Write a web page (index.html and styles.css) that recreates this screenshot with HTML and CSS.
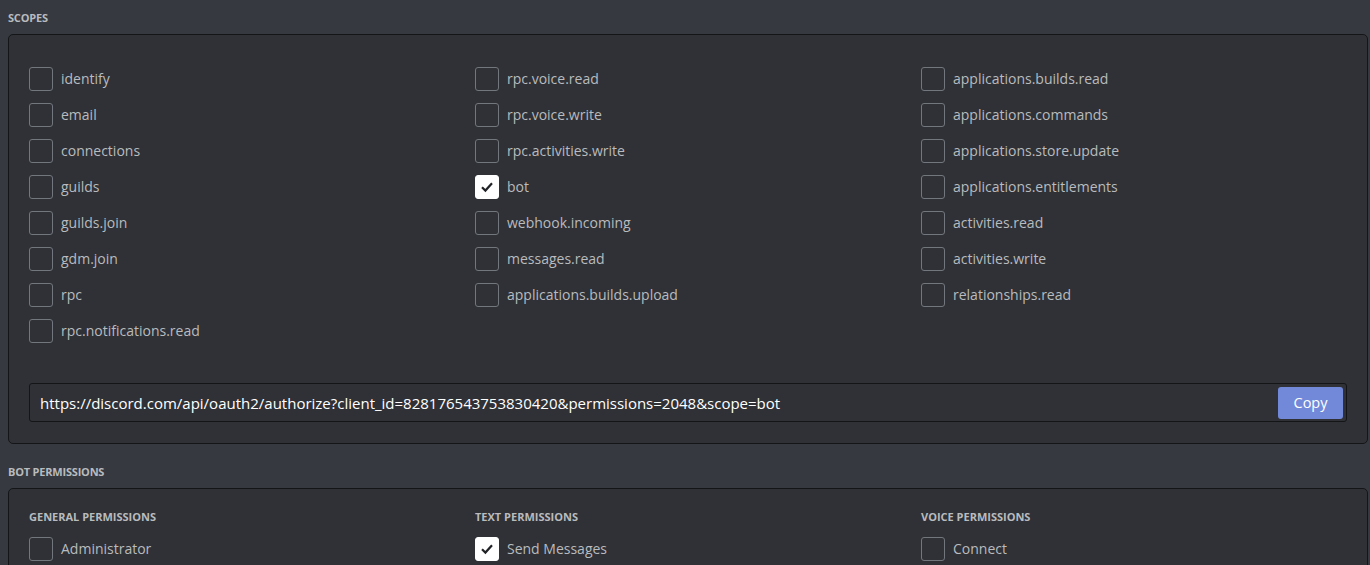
FILE: index.html
```html
<!DOCTYPE html>
<html>
<head>
<meta charset="utf-8">
<link rel="stylesheet" href="styles.css">
</head>
<body>
<div class="page">
  <div class="section-title">Scopes</div>
  <div class="panel scopes">
    <div class="grid">
      <div class="col">
        <label class="item"><span class="box"></span><span class="lbl">identify</span></label>
        <label class="item"><span class="box"></span><span class="lbl">email</span></label>
        <label class="item"><span class="box"></span><span class="lbl">connections</span></label>
        <label class="item"><span class="box"></span><span class="lbl">guilds</span></label>
        <label class="item"><span class="box"></span><span class="lbl">guilds.join</span></label>
        <label class="item"><span class="box"></span><span class="lbl">gdm.join</span></label>
        <label class="item"><span class="box"></span><span class="lbl">rpc</span></label>
        <label class="item"><span class="box"></span><span class="lbl">rpc.notifications.read</span></label>
      </div>
      <div class="col">
        <label class="item"><span class="box"></span><span class="lbl">rpc.voice.read</span></label>
        <label class="item"><span class="box"></span><span class="lbl">rpc.voice.write</span></label>
        <label class="item"><span class="box"></span><span class="lbl">rpc.activities.write</span></label>
        <label class="item"><span class="box checked"><svg width="16" height="16" viewBox="0 0 16 16"><path d="M3 8.3 L6.4 11.6 L13 4.3" fill="none" stroke="#202225" stroke-width="2.2"/></svg></span><span class="lbl">bot</span></label>
        <label class="item"><span class="box"></span><span class="lbl">webhook.incoming</span></label>
        <label class="item"><span class="box"></span><span class="lbl">messages.read</span></label>
        <label class="item"><span class="box"></span><span class="lbl">applications.builds.upload</span></label>
      </div>
      <div class="col">
        <label class="item"><span class="box"></span><span class="lbl">applications.builds.read</span></label>
        <label class="item"><span class="box"></span><span class="lbl">applications.commands</span></label>
        <label class="item"><span class="box"></span><span class="lbl">applications.store.update</span></label>
        <label class="item"><span class="box"></span><span class="lbl">applications.entitlements</span></label>
        <label class="item"><span class="box"></span><span class="lbl">activities.read</span></label>
        <label class="item"><span class="box"></span><span class="lbl">activities.write</span></label>
        <label class="item"><span class="box"></span><span class="lbl">relationships.read</span></label>
      </div>
    </div>
    <div class="url">
      <span class="url-text">https://discord.com/api/oauth2/authorize?client_id=828176543753830420&amp;permissions=2048&amp;scope=bot</span>
      <button class="copy">Copy</button>
    </div>
  </div>

  <div class="section-title second">Bot Permissions</div>
  <div class="panel perms">
    <div class="grid">
      <div class="col">
        <div class="sub-title">General Permissions</div>
        <label class="item"><span class="box"></span><span class="lbl">Administrator</span></label>
      </div>
      <div class="col">
        <div class="sub-title">Text Permissions</div>
        <label class="item"><span class="box checked"><svg width="16" height="16" viewBox="0 0 16 16"><path d="M3 8.3 L6.4 11.6 L13 4.3" fill="none" stroke="#202225" stroke-width="2.2"/></svg></span><span class="lbl">Send Messages</span></label>
      </div>
      <div class="col">
        <div class="sub-title">Voice Permissions</div>
        <label class="item"><span class="box"></span><span class="lbl">Connect</span></label>
      </div>
    </div>
  </div>
</div>
</body>
</html>
```

FILE: styles.css
```css
html, body {
  margin: 0;
  padding: 0;
  background: #36393f;
  overflow: hidden;
}
body {
  font-family: "Open Sans", "Noto Sans", sans-serif;
  color: #b9bbbe;
}
.page {
  padding: 10px 2px 0 8px;
}
.section-title {
  font-size: 11px;
  font-weight: 700;
  text-transform: uppercase;
  color: #b9bbbe;
  line-height: 16px;
  height: 16px;
  letter-spacing: -0.2px;
  margin-bottom: 8px;
}
.section-title.second {
  margin-top: 20px;
}
.panel {
  background: #2f3136;
  border: 1px solid #141517;
  border-radius: 5px;
  padding: 32px 20px 21px 20px;
}
.perms {
  padding-top: 20px;
}
.grid {
  display: grid;
  grid-template-columns: 446px 446px 1fr;
}
.col {
  display: flex;
  flex-direction: column;
  gap: 12px;
}
.item {
  display: flex;
  align-items: center;
  height: 24px;
}
.box {
  width: 22px;
  height: 22px;
  border: 1px solid #72767d;
  border-radius: 3px;
  flex: none;
  display: flex;
  align-items: center;
  justify-content: center;
}
.box.checked {
  background: #ffffff;
  border-color: #ffffff;
}
.lbl {
  margin-left: 8px;
  font-size: 14px;
  line-height: 20px;
  color: #b9bbbe;
}
.url {
  margin-top: 40px;
  height: 37px;
  border: 1px solid #141517;
  border-radius: 3px;
  background: #2f3136;
  display: flex;
  align-items: center;
  justify-content: space-between;
  padding: 0 3px 0 10px;
}
.url-text {
  font-size: 15px;
  color: #ffffff;
  white-space: nowrap;
}
.copy {
  width: 65px;
  height: 32px;
  background: #7289da;
  color: #ffffff;
  border: none;
  border-radius: 3px;
  font-family: "Open Sans", "Noto Sans", sans-serif;
  font-size: 14.5px;
  padding: 0;
}
.sub-title {
  font-size: 11px;
  font-weight: 700;
  text-transform: uppercase;
  color: #b9bbbe;
  line-height: 16px;
  letter-spacing: 0;
  margin-bottom: 0;
}
```
